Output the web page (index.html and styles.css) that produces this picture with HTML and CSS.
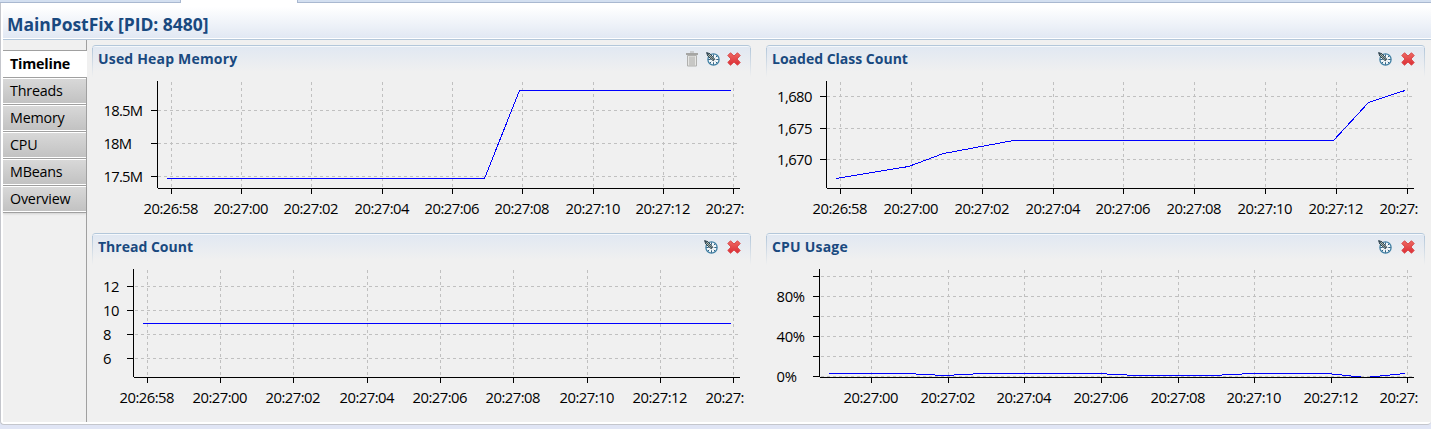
FILE: index.html
```html
<!DOCTYPE html>
<html lang="en">
<head>
<meta charset="utf-8">
<title>MainPostFix [PID: 8480]</title>
<link rel="stylesheet" href="styles.css">
</head>
<body>
<svg class="defs" width="0" height="0">
  <defs>
    <linearGradient id="red" x1="0" y1="0" x2="0" y2="1"><stop offset="0" stop-color="#ee6a64"/><stop offset="1" stop-color="#dc2c34"/></linearGradient>
    <symbol id="close" viewBox="0 0 14 14">
      <path d="M3.500.8 7 4 10.500.8 13.200 3.500 10 7l3.200 3.500-2.700 2.700L7 10l-3.500 3.200L.8 10.500 4 7 .8 3.500z" fill="url(#red)" stroke="#d9484a" stroke-width="1" stroke-linejoin="round"/>
    </symbol>
    <symbol id="gauge" viewBox="0 0 14 14">
      <circle cx="7.500" cy="7.500" r="5.600" fill="#f4f8fa" stroke="#3f7fa3" stroke-width="1.300"/>
      <path d="M7.500 2.500v2.200M7.500 10.300v2.400M2.300 7.500h2.400M10.300 7.500h2.400M11 4l-1.200 1.200M4 11l1.200-1.200M11 11l-1.200-1.200" stroke="#2f5f80" fill="none"/>
      <path d="M.6.600 4 1.800 8.800 7.300 7.300 8.800 1.800 4z" fill="#b9c4b8" stroke="#263b49" stroke-width="1"/>
      <path d="M1 1l7 7" stroke="#263b49" stroke-width=".8"/>
    </symbol>
    <symbol id="trash" viewBox="0 0 14 16">
      <path d="M5 1h4" stroke="#b0b0ae" fill="none"/>
      <path d="M1 3h12" stroke="#a6a6a4" stroke-width="2" fill="none"/>
      <path d="M2.500 4.500h9v10.500h-9z" fill="#e6e6e4" stroke="#b0b0ae"/>
      <path d="M5 5.500v9M7 5.500v9M9 5.500v9" stroke="#a8a8a6" fill="none"/>
    </symbol>
  </defs>
</svg>
<div class="tabstrip"><div class="strip strip-left"></div><div class="active-gap"></div><div class="strip strip-right"></div></div>
<main class="editor">
  <header class="title"><h1>MainPostFix [PID: 8480]</h1></header>
  <div class="body">
    <nav class="tabs">
      <div class="spacer"></div>
      <a class="tab selected">Timeline</a>
      <a class="tab">Threads</a>
      <a class="tab">Memory</a>
      <a class="tab">CPU</a>
      <a class="tab">MBeans</a>
      <a class="tab">Overview</a>
    </nav>
    <div class="grid">
      <section class="panel">
        <div class="head"><h2 class="t-heap">Used Heap Memory</h2><div class="tools heap-tools"><svg class="trash"><use href="#trash"/></svg><svg class="icon"><use href="#gauge"/></svg><svg class="icon"><use href="#close"/></svg></div></div>
        <svg class="chart" viewBox="92 77 659 148">
          <path class="gridline" d="M158 110.500H740M158 143.500H740M158 176.500H740M171.500 82V188M241.500 82V188M311.500 82V188M382.500 82V188M452.500 82V188M522.500 82V188M593.500 82V188M663.500 82V188M733.500 82V188"/>
          <path class="series" d="M167 178.500H484.500L519.500 90.500H731"/>
          <path class="axis" d="M157.500 81V188M158 188.500H740M151 110.500H157M151 143.500H157M151 176.500H157M171.500 189V194M241.500 189V194M311.500 189V194M382.500 189V194M452.500 189V194M522.500 189V194M593.500 189V194M663.500 189V194M733.500 189V194"/>
          <text x="103.500" y="116" textLength="39.500">18.5M</text><text x="103.500" y="149" textLength="28.500">18M</text><text x="103.500" y="182" textLength="39.500">17.5M</text>
          <text x="143.500" y="214" textLength="55">20:26:58</text><text x="213.500" y="214" textLength="55">20:27:00</text><text x="283.500" y="214" textLength="55">20:27:02</text><text x="354.500" y="214" textLength="55">20:27:04</text><text x="424.500" y="214" textLength="55">20:27:06</text><text x="494.500" y="214" textLength="55">20:27:08</text><text x="565.500" y="214" textLength="55">20:27:10</text><text x="635.500" y="214" textLength="55">20:27:12</text><text x="705.500" y="214" textLength="39">20:27:</text>
        </svg>
      </section>
      <section class="panel">
        <div class="head"><h2 class="t-class">Loaded Class Count</h2><div class="tools"><svg class="icon"><use href="#gauge"/></svg><svg class="icon"><use href="#close"/></svg></div></div>
        <svg class="chart" viewBox="766 77 659 148">
          <path class="gridline" d="M827 96.500H1414M827 128.500H1414M827 159.500H1414M840.500 82V188M911.500 82V188M982.500 82V188M1053.500 82V188M1123.500 82V188M1194.500 82V188M1265.500 82V188M1336.500 82V188M1407.500 82V188"/>
          <path class="series" d="M836 178.500L908.500 166.500L943.500 153.500L1013.500 140.500H1333.500L1368.500 102.500L1405 90.500"/>
          <path class="axis" d="M826.500 81V188M827 188.500H1414M820 96.500H826M820 128.500H826M820 159.500H826M840.500 189V194M911.500 189V194M982.500 189V194M1053.500 189V194M1123.500 189V194M1194.500 189V194M1265.500 189V194M1336.500 189V194M1407.500 189V194"/>
          <text x="777" y="102" textLength="35.500">1,680</text><text x="777" y="134" textLength="35.500">1,675</text><text x="777" y="165" textLength="35.500">1,670</text>
          <text x="812.500" y="214" textLength="55">20:26:58</text><text x="883.500" y="214" textLength="55">20:27:00</text><text x="954.500" y="214" textLength="55">20:27:02</text><text x="1025.500" y="214" textLength="55">20:27:04</text><text x="1095.500" y="214" textLength="55">20:27:06</text><text x="1166.500" y="214" textLength="55">20:27:08</text><text x="1237.500" y="214" textLength="55">20:27:10</text><text x="1308.500" y="214" textLength="55">20:27:12</text><text x="1379.500" y="214" textLength="39">20:27:</text>
        </svg>
      </section>
      <section class="panel">
        <div class="head"><h2 class="t-thread">Thread Count</h2><div class="tools"><svg class="icon"><use href="#gauge"/></svg><svg class="icon"><use href="#close"/></svg></div></div>
        <svg class="chart" viewBox="92 265 659 148">
          <path class="gridline" d="M135 286.500H740M135 310.500H740M135 334.500H740M135 358.500H740M147.500 270V377M220.500 270V377M293.500 270V377M367.500 270V377M440.500 270V377M513.500 270V377M587.500 270V377M660.500 270V377M733.500 270V377"/>
          <path class="series" d="M143 323.500H731"/>
          <path class="axis" d="M133.500 269V377M134 377.500H740M127 286.500H133M127 310.500H133M127 334.500H133M127 358.500H133M147.500 378V383M220.500 378V383M293.500 378V383M367.500 378V383M440.500 378V383M513.500 378V383M587.500 378V383M660.500 378V383M733.500 378V383"/>
          <text x="103" y="292" textLength="16.500">12</text><text x="103" y="316" textLength="16.500">10</text><text x="103" y="340">8</text><text x="103" y="364">6</text>
          <text x="119.500" y="403" textLength="55">20:26:58</text><text x="192.500" y="403" textLength="55">20:27:00</text><text x="265.500" y="403" textLength="55">20:27:02</text><text x="339.500" y="403" textLength="55">20:27:04</text><text x="412.500" y="403" textLength="55">20:27:06</text><text x="485.500" y="403" textLength="55">20:27:08</text><text x="559.500" y="403" textLength="55">20:27:10</text><text x="632.500" y="403" textLength="55">20:27:12</text><text x="705.500" y="403" textLength="39">20:27:</text>
        </svg>
      </section>
      <section class="panel">
        <div class="head"><h2 class="t-cpu">CPU Usage</h2><div class="tools"><svg class="icon"><use href="#gauge"/></svg><svg class="icon"><use href="#close"/></svg></div></div>
        <svg class="chart" viewBox="766 265 659 148">
          <path class="gridline" d="M821 276.500H1414M821 296.500H1414M821 316.500H1414M821 336.500H1414M821 356.500H1414M821 376.500H1414M871.500 270V377M948.500 270V377M1024.500 270V377M1101.500 270V377M1178.500 270V377M1254.500 270V377M1331.500 270V377M1407.500 270V377"/>
          <path class="axis" d="M819.500 269V377M820 377.500H1414M813 276.500H819M813 296.500H819M813 316.500H819M813 336.500H819M813 356.500H819M813 376.500H819M871.500 378V383M948.500 378V383M1024.500 378V383M1101.500 378V383M1178.500 378V383M1254.500 378V383M1331.500 378V383M1407.500 378V383"/>
          <path class="series" d="M829 373.500H916M916 374.500H935M935 375.500H954M954 374.500H973M973 373.500H1107M1107 374.500H1127M1127 375.500H1222M1222 374.500H1242M1242 373.500H1332M1332 374.500H1342M1342 375.500H1351M1351 376.500H1361M1370 376.500H1380M1380 375.500H1390M1390 374.500H1400M1400 373.500H1405"/>
          <text x="776.500" y="302" textLength="28.500">80%</text><text x="776.500" y="342" textLength="28.500">40%</text><text x="776.500" y="382" textLength="20.500">0%</text>
          <text x="843.500" y="403" textLength="55">20:27:00</text><text x="920.500" y="403" textLength="55">20:27:02</text><text x="996.500" y="403" textLength="55">20:27:04</text><text x="1073.500" y="403" textLength="55">20:27:06</text><text x="1150.500" y="403" textLength="55">20:27:08</text><text x="1226.500" y="403" textLength="55">20:27:10</text><text x="1303.500" y="403" textLength="55">20:27:12</text><text x="1379.500" y="403" textLength="39">20:27:</text>
        </svg>
      </section>
    </div>
  </div>
</main>
</body>
</html>
```
FILE: styles.css
```css
* { box-sizing: border-box; }
body { margin: 0; width: 1431px; height: 429px; overflow: hidden; background: #e0e5f5; font-family: "Open Sans", "Noto Sans", sans-serif; font-size: 14px; color: #000; }
.defs { display: block; }
.tabstrip { display: flex; height: 3px; background: #fff; }
.strip { background: #d3dff0; border-bottom: 1px solid #a9b8d0; }
.strip-left { width: 181px; border-right: 1px solid #a9b8d0; }
.active-gap { width: 116px; }
.strip-right { flex: 1; border-left: 1px solid #a9b8d0; }
.editor { height: 422px; background: #fff; border: 1px solid #c4c6cc; border-top: 0; border-right: 0; border-radius: 0 0 4px 4px; padding: 0 0 2px 2px; display: flex; flex-direction: column; }
.title { height: 37px; flex: none; padding-left: 4px; background: linear-gradient(#fff 10%, #e1e8f3 35px, #fff 35px, #fff 36px, #b3c7da 36px); }
h1, h2 { margin: 0; font-weight: 700; color: #19497f; white-space: nowrap; }
h1 { font-size: 17.500px; line-height: 24px; padding-top: 9px; letter-spacing: -0.050px; }
.body { flex: 1; display: flex; background: #f0f0f0; }
.tabs { width: 84px; border-right: 1px solid #a0a0a0; }
.spacer { height: 11px; border-bottom: 1px solid #a0a0a0; }
.tab { display: block; height: 27px; padding-left: 7px; line-height: 23px; font-size: 14.300px; letter-spacing: -0.2px; border-top: 1px solid #fff; border-bottom: 1px solid #a0a0a0; background: linear-gradient(#d8d8d8, #c2c2c2 24px, #fff 24px); }
.tab.selected { background: #fff; font-weight: 700; width: 84px; }
.tab:last-child { box-shadow: 0 1px 2px rgba(0, 0, 0, .12); }
.grid { display: grid; grid-template-columns: 659px 659px; grid-template-rows: 180px 180px; gap: 8px 15px; padding: 5px 0 0 5px; }
.panel { display: flex; flex-direction: column; }
.head { position: relative; height: 32px; display: flex; justify-content: space-between; padding: 0 10px 0 6px; border-top: 1px solid #b3c7da; border-radius: 4px 4px 0 0; background: linear-gradient(#f5f8fb 1px, #e1e8f2 1px, #f0f0f0 26px); }
.head::before { content: ""; position: absolute; inset: 2px 0 0; background: linear-gradient(#b3c7da, #f0f0f0) left / 1px 100% no-repeat, linear-gradient(#b3c7da, #f0f0f0) right / 1px 100% no-repeat; }
h2 { font-size: 14px; line-height: 20px; padding-top: 3px; }
.t-heap { letter-spacing: 0.180px; }
.t-cpu { letter-spacing: 0.200px; }
.tools { display: flex; gap: 9px; padding-top: 6px; }
.heap-tools { gap: 7px; }
.icon { width: 14px; height: 14px; }
.trash { width: 14px; height: 16px; margin-top: -1px; }
.chart { width: 659px; height: 148px; display: block; }
.gridline { stroke: #c0c0c0; stroke-dasharray: 3 3; fill: none; shape-rendering: crispEdges; }
.axis { stroke: #000; fill: none; shape-rendering: crispEdges; }
.series { stroke: #0000ff; fill: none; shape-rendering: crispEdges; }
.chart text { font-size: 14.800px; fill: #000; }
```
